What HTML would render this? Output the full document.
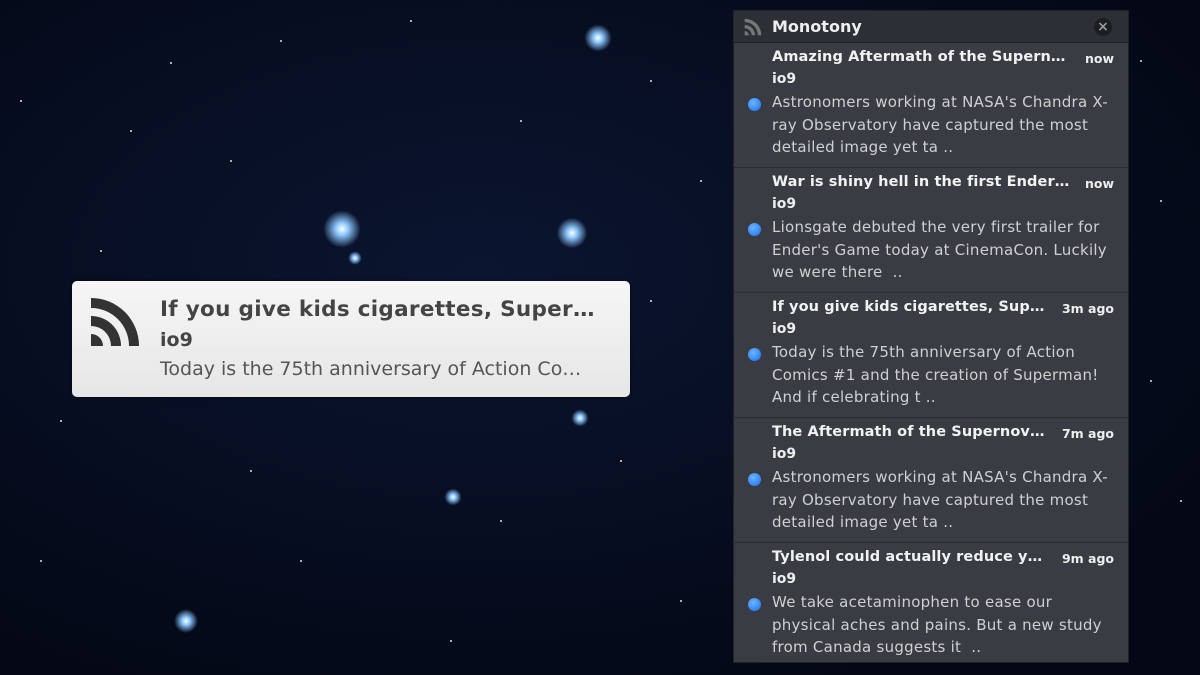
<!DOCTYPE html>
<html><head><style>
body{margin:0;width:1200px;height:675px;overflow:hidden;background:radial-gradient(ellipse at 40% 40%,#0b1530,#040816 80%);font-family:"Liberation Sans",sans-serif;position:relative}
.s{position:absolute;background:#dde;border-radius:50%;width:2px;height:2px}
.b{position:absolute;border-radius:50%;background:radial-gradient(circle,#fff 0,#8cc8ff 20%,rgba(60,140,255,0) 60%)}
#panel{position:absolute;left:733px;top:10px;width:396px;height:653px;background:#393c43;border:1px solid #222;box-sizing:border-box;font-family:"DejaVu Sans",sans-serif}
#hdr{height:31px;background:#2c2f35;border-bottom:1px solid #1e2024;position:relative;color:#eee;font-weight:bold;font-size:16px}
.it{height:124px;border-bottom:1px solid #2a2d33;position:relative;color:#ddd;font-size:14px;white-space:nowrap}
.t{position:absolute;left:38px;top:6px;font-weight:bold;color:#f2f2f2;font-size:14.5px;letter-spacing:0.1px}
.tm{position:absolute;right:14px;top:8px;font-weight:bold;font-size:12.5px;color:#eee}
.src{position:absolute;left:38px;top:28px;font-weight:bold;color:#eee}
.bd{position:absolute;left:38px;top:48px;line-height:22.7px;color:#d0d0d0;font-size:15px;letter-spacing:0.25px}
.dot{position:absolute;left:14px;top:55px;width:13px;height:13px;border-radius:50%;background:radial-gradient(circle at 40% 35%,#6ab4ff,#1a6ff0)}
#toast{position:absolute;left:72px;top:281px;width:558px;height:116px;border-radius:5px;background:linear-gradient(#f6f6f6,#e6e6e6);box-shadow:0 0 3px rgba(0,0,0,.6)}
</style></head><body>
<div class="b" style="left:320px;top:207px;width:44px;height:44px"></div>
<div class="b" style="left:554px;top:215px;width:36px;height:36px"></div>
<div class="b" style="left:582px;top:22px;width:32px;height:32px"></div>
<div class="b" style="left:172px;top:607px;width:28px;height:28px"></div>
<div class="b" style="left:443px;top:487px;width:20px;height:20px"></div>
<div class="b" style="left:570px;top:408px;width:20px;height:20px"></div>
<div class="b" style="left:347px;top:250px;width:16px;height:16px"></div>
<div class="s" style="left:170px;top:62px"></div><div class="s" style="left:410px;top:20px"></div>
<div class="s" style="left:230px;top:160px"></div><div class="s" style="left:520px;top:120px"></div>
<div class="s" style="left:60px;top:420px"></div><div class="s" style="left:300px;top:560px"></div>
<div class="s" style="left:650px;top:300px"></div><div class="s" style="left:1160px;top:200px"></div>
<div class="s" style="left:1180px;top:500px"></div><div class="s" style="left:680px;top:600px"></div>
<div class="s" style="left:100px;top:250px"></div><div class="s" style="left:450px;top:640px"></div>
<div class="s" style="left:20px;top:100px"></div><div class="s" style="left:650px;top:80px"></div>
<div class="s" style="left:130px;top:130px"></div><div class="s" style="left:280px;top:40px"></div>
<div class="s" style="left:380px;top:300px"></div><div class="s" style="left:40px;top:560px"></div>
<div class="s" style="left:500px;top:520px"></div><div class="s" style="left:620px;top:460px"></div>
<div class="s" style="left:700px;top:180px"></div><div class="s" style="left:1150px;top:380px"></div>
<div class="s" style="left:1140px;top:60px"></div><div class="s" style="left:250px;top:470px"></div>

<div id="toast">
<svg style="position:absolute;left:17px;top:15px" width="52" height="52" viewBox="0 0 52 52"><path d="M2 2A48 48 0 0 1 50 50H40A38 38 0 0 0 2 12Z M2 20A30 30 0 0 1 32 50H22A20 20 0 0 0 2 30Z M2 38A12 12 0 0 1 14 50H2Z" fill="#333"/></svg>
<div style="position:absolute;left:88px;top:16px;font-size:21.5px;font-weight:bold;color:#444;font-family:'DejaVu Sans',sans-serif;letter-spacing:0.3px">If you give kids cigarettes, Super…</div>
<div style="position:absolute;left:88px;top:48px;font-size:19px;font-weight:bold;color:#444;font-family:'DejaVu Sans',sans-serif">io9</div>
<div style="position:absolute;left:88px;top:77px;font-size:19px;color:#555;font-family:'DejaVu Sans',sans-serif">Today is the 75th anniversary of Action Co…</div>
</div>

<div id="panel">
<div id="hdr">
<svg style="position:absolute;left:10px;top:7px" width="18" height="18" viewBox="0 0 52 52"><path d="M2 2A48 48 0 0 1 50 50H40A38 38 0 0 0 2 12Z M2 20A30 30 0 0 1 32 50H22A20 20 0 0 0 2 30Z M2 38A12 12 0 0 1 14 50H2Z" fill="#777"/></svg>
<span style="position:absolute;left:38px;top:6px">Monotony</span>
<div style="position:absolute;right:16px;top:7px;width:18px;height:18px;border-radius:50%;background:#1c1d20;color:#999;font-size:14px;text-align:center;line-height:18px">×</div>
</div>
<div class="it"><div class="t">Amazing Aftermath of the Supern…</div><div class="tm">now</div><div class="src">io9</div><div class="dot"></div><div class="bd">Astronomers working at NASA's Chandra X-<br>ray Observatory have captured the most<br>detailed image yet ta ..</div></div>
<div class="it"><div class="t">War is shiny hell in the first Ender…</div><div class="tm">now</div><div class="src">io9</div><div class="dot"></div><div class="bd">Lionsgate debuted the very first trailer for<br>Ender's Game today at CinemaCon. Luckily<br>we were there&nbsp; ..</div></div>
<div class="it"><div class="t">If you give kids cigarettes, Sup…</div><div class="tm">3m ago</div><div class="src">io9</div><div class="dot"></div><div class="bd">Today is the 75th anniversary of Action<br>Comics #1 and the creation of Superman!<br>And if celebrating t ..</div></div>
<div class="it"><div class="t">The Aftermath of the Supernov…</div><div class="tm">7m ago</div><div class="src">io9</div><div class="dot"></div><div class="bd">Astronomers working at NASA's Chandra X-<br>ray Observatory have captured the most<br>detailed image yet ta ..</div></div>
<div class="it" style="border:0"><div class="t">Tylenol could actually reduce y…</div><div class="tm">9m ago</div><div class="src">io9</div><div class="dot"></div><div class="bd">We take acetaminophen to ease our<br>physical aches and pains. But a new study<br>from Canada suggests it&nbsp; ..</div></div>
</div>
</body></html>
